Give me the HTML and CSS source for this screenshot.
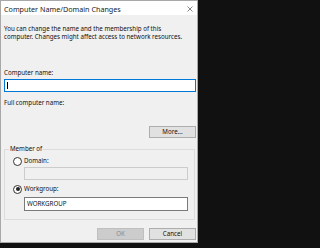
FILE: index.html
```html
<!DOCTYPE html>
<html>
<head>
<meta charset="utf-8">
<link rel="stylesheet" href="styles.css">
</head>
<body>
<div class="win">
  <div class="title">
    <span class="title-text">Computer Name/Domain Changes</span>
    <svg class="close" width="6" height="6" viewBox="0 0 6 6"><path d="M0.5 0.5 L5.5 5.5 M5.5 0.5 L0.5 5.5" stroke="#555" stroke-width="0.7" fill="none"/></svg>
  </div>
  <div class="body">
    <p class="desc">You can change the name and the membership of this<br>computer. Changes might affect access to network resources.</p>
    <div class="label lbl-name">Computer name:</div>
    <div class="input focused"><span class="caret"></span></div>
    <div class="label lbl-full">Full computer name:</div>
    <div class="btn-row more-row"><div class="btn">More...</div></div>
    <fieldset class="group">
      <legend>Member of</legend>
      <div class="radio-row"><span class="radio"></span><span>Domain:</span></div>
      <div class="input sub disabled"></div>
      <div class="radio-row wg"><span class="radio checked"></span><span>Workgroup:</span></div>
      <div class="input sub wg-input">WORKGROUP</div>
    </fieldset>
    <div class="btn-row footer">
      <div class="btn off">OK</div>
      <div class="btn">Cancel</div>
    </div>
  </div>
</div>
</body>
</html>
```

FILE: styles.css
```css
html, body {
  margin: 0;
  padding: 0;
  background: #111;
  width: 203px;
  height: 248px;
  overflow: hidden;
}
.win {
  width: 198px;
  height: 243px;
  box-sizing: border-box;
  border: 1px solid #a8a8a8;
  background: #f0f0f0;
  font-family: "Noto Sans", "Open Sans", sans-serif;
  color: #111;
  display: flex;
  flex-direction: column;
}
.title {
  height: 14px;
  background: #fff;
  display: flex;
  align-items: center;
  justify-content: space-between;
  padding: 0 4px 0 3px;
  flex: none;
}
.title-text {
  font-size: 7.2px;
  line-height: 14px;
  color: #222;
  position: relative;
  top: 1px;
}
.close {
  display: block;
  margin-top: 1px;
}
.body {
  padding: 0 1px 0 3px;
  font-size: 6.2px;
  line-height: 8px;
}
.desc {
  margin: 10px 0 0;
  white-space: nowrap;
}
.label {
  height: 8px;
  white-space: nowrap;
}
.lbl-name { margin-top: 28px; }
.lbl-full { margin-top: 7px; }
.input {
  box-sizing: border-box;
  height: 13px;
  margin-top: 2px;
  border: 1px solid #7a7a7a;
  background: #fff;
  display: flex;
  align-items: center;
  padding-left: 2px;
}
.input.focused { border-color: #0078d7; }
.caret {
  width: 1px;
  height: 7px;
  background: #000;
}
.btn-row {
  display: flex;
  justify-content: flex-end;
  gap: 5px;
}
.more-row { margin-top: 19px; }
.btn {
  box-sizing: border-box;
  width: 47px;
  height: 12px;
  border: 1px solid #adadad;
  background: #e1e1e1;
  display: flex;
  align-items: center;
  justify-content: center;
  font-size: 6.2px;
}
.btn.off {
  background: #cccccc;
  border-color: #bfbfbf;
  color: #8a8a8a;
}
.group {
  margin: 7px 1px 0 0;
  padding: 4px 8px 8px 8px;
  border: 1px solid #dcdcdc;
  min-width: 0;
}
.group legend {
  padding: 0 1px;
  margin-left: -4px;
  line-height: 8px;
  font-size: 6.2px;
}
.radio-row {
  display: flex;
  align-items: center;
  gap: 2px;
  height: 8px;
}
.radio-row.wg { margin-top: 5px; }
.radio {
  box-sizing: border-box;
  width: 9px;
  height: 9px;
  border: 1px solid #333;
  border-radius: 50%;
  background: #fff;
  display: flex;
  align-items: center;
  justify-content: center;
}
.radio.checked::after {
  content: "";
  width: 4px;
  height: 4px;
  border-radius: 50%;
  background: #222;
}
.input.sub {
  margin-left: 11px;
  width: 164px;
}
.input.disabled {
  background: #f0f0f0;
  border-color: #cccccc;
}
.wg-input {
  margin-top: 4px;
  height: 14px;
}
.footer { margin-top: 8px; }
```
